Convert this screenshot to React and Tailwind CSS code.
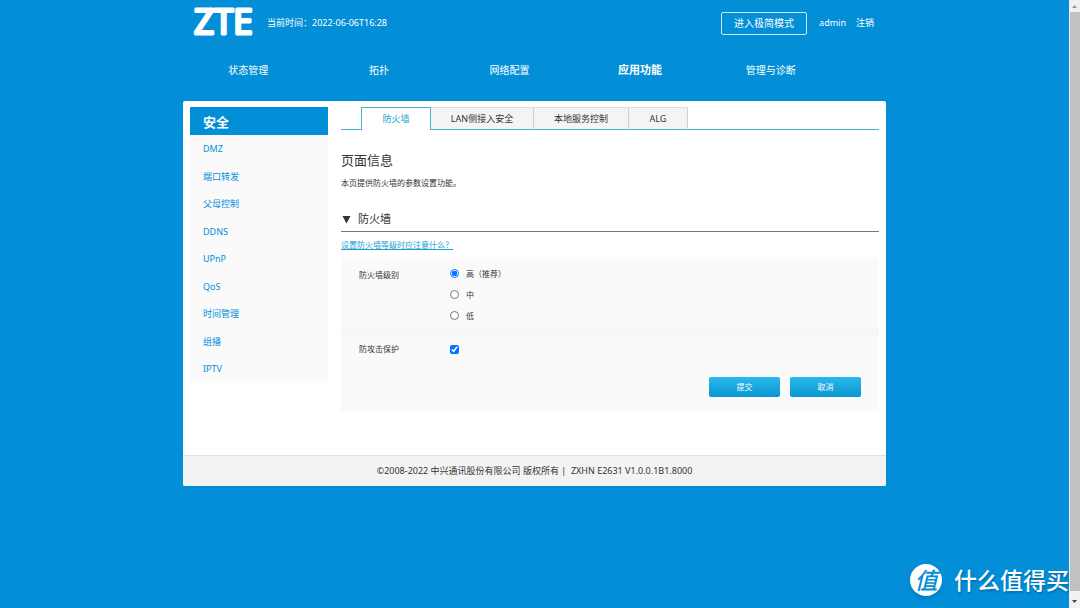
import React from "react";

const navItems = ["状态管理", "拓扑", "网络配置", "应用功能", "管理与诊断"];
const sideItems = ["DMZ", "端口转发", "父母控制", "DDNS", "UPnP", "QoS", "时间管理", "组播", "IPTV"];
const levels = ["高（推荐）", "中", "低"];

function Logo() {
  return (
    <svg viewBox="0 0 62 46" className="h-[46px] w-[62px] overflow-visible" role="img" aria-label="ZTE">
      <text
        x="1"
        y="34"
        fill="#fff"
        stroke="#fff"
        strokeWidth="3"
        strokeLinejoin="round"
        className="font-['Open_Sans',sans-serif] text-[35px] font-normal"
      >
        ZTE
      </text>
    </svg>
  );
}

function Header() {
  return (
    <header className="text-white">
      <div className="flex h-[46px] items-center pr-3 pl-2.5">
        <a href="#home">
          <Logo />
        </a>
        <p className="ml-3 text-[9px]">当前时间：2022-06-06T16:28</p>
        <button type="button" className="ml-auto h-[23px] rounded-xs border border-white/80 px-3 text-[10px]">
          进入极简模式
        </button>
        <a href="#admin" className="ml-3 text-[9px]">admin</a>
        <a href="#logout" className="ml-2.5 text-[9px]">注销</a>
      </div>
      <nav className="grid h-[55px] grid-cols-5 pt-[14px] pr-[50px] text-center">
        {navItems.map((item) => (
          <a
            key={item}
            href="#nav"
            className={item === "应用功能" ? "text-[11px] leading-5 font-bold" : "text-[10px] leading-5"}
          >
            {item}
          </a>
        ))}
      </nav>
    </header>
  );
}

function Sidebar() {
  return (
    <aside className="w-[138px] shrink-0 self-start bg-[#fafafa]">
      <h2 className="h-7 bg-[#028fd8] pl-[13px] text-[13px] leading-[30px] font-bold text-white">安全</h2>
      <ul className="grid h-[248px] auto-rows-fr pl-[13px] text-[9px] text-[#028fd8]">
        {sideItems.map((item) => (
          <li key={item} className="flex items-center">
            <a href="#side">{item}</a>
          </li>
        ))}
      </ul>
    </aside>
  );
}

function Tabs() {
  const tab = "border-r border-r-[#d0d0d0] border-t border-t-[#dedede] border-b border-b-[#45b2d8] bg-[#f4f4f4]";
  return (
    <div role="tablist" className="flex h-[23px] text-[9px] text-[#333]">
      <div className="w-5 border-b border-b-[#45b2d8]" />
      <button type="button" role="tab" aria-selected="true" className="w-[70px] border-x border-t border-[#45b2d8] text-[#1c9fd0]">
        防火墙
      </button>
      <button type="button" role="tab" className={`${tab} w-[103px]`}>LAN侧接入安全</button>
      <button type="button" role="tab" className={`${tab} w-[95px]`}>本地服务控制</button>
      <button type="button" role="tab" className={`${tab} w-[59px]`}>ALG</button>
      <div className="flex-1 border-b border-b-[#45b2d8]" />
    </div>
  );
}

function FirewallForm() {
  const action = "h-5 w-[71px] rounded-xs bg-linear-to-b from-[#29b9ee] to-[#0795cf] text-white";
  return (
    <form className="mt-1 bg-[#fafafa]" onSubmit={(e) => e.preventDefault()}>
      <div role="radiogroup" aria-labelledby="level-title" className="flex h-[71px] pt-1.5 pl-[18px]">
        <span id="level-title" className="w-[91px] leading-6">防火墙级别</span>
        <div className="leading-[21px]">
          {levels.map((level, i) => (
            <label key={level} className="flex items-center gap-[7px]">
              <input type="radio" name="level" defaultChecked={i === 0} className="h-[9px] w-[9px] accent-[#0075ff]" />
              {level}
            </label>
          ))}
        </div>
      </div>
      <div className="h-[9px] bg-[#f7f7f7]" />
      <div className="flex h-[24px] items-center pl-[18px]">
        <label htmlFor="guard" className="w-[91px]">防攻击保护</label>
        <input id="guard" type="checkbox" defaultChecked className="h-[9px] w-[9px] accent-[#0075ff]" />
      </div>
      <div className="flex justify-end gap-[10px] pt-4 pr-[18px] pb-[15px]">
        <button type="submit" className={action}>提交</button>
        <button type="reset" className={action}>取消</button>
      </div>
    </form>
  );
}

function Watermark() {
  return (
    <div className="absolute right-0 bottom-3 flex items-center gap-3 text-white">
      <span className="flex h-8 w-8 items-center justify-center rounded-full bg-white text-[23px] leading-8 font-medium text-[#028fd8] italic shadow-md">
        值
      </span>
      <span className="text-[23px] leading-8 font-medium [text-shadow:1px_2px_2px_rgb(0_60_110/0.4)]">什么值得买</span>
    </div>
  );
}

function ScrollBar() {
  return (
    <div className="flex w-[11px] shrink-0 flex-col items-center bg-[#f1f1f1]" aria-hidden="true">
      <svg viewBox="0 0 11 12" className="h-3 w-[11px]"><path d="M3 8 5.5 5 8 8z" fill="#999" /></svg>
      <div className="mb-[5px] w-[10px] flex-1 bg-[#c1c1c1]" />
      <svg viewBox="0 0 11 12" className="h-3 w-[11px]"><path d="M3 4 5.5 7 8 4z" fill="#444" /></svg>
    </div>
  );
}

export default function App() {
  return (
    <div className="flex min-h-screen bg-[#028fd8] font-['Noto_Sans','Noto_Sans_CJK_SC',sans-serif] text-[8px] text-[#333]">
      <div className="relative flex-1">
        <div className="mx-auto max-w-[703px]">
          <Header />
          <div className="overflow-hidden rounded-xs bg-white">
            <div className="flex gap-[13px] px-[7px] pt-1.5 pb-[43px]">
              <Sidebar />
              <main className="min-w-0 flex-1">
                <Tabs />
                <h1 className="mt-5 text-[13px] leading-5">页面信息</h1>
                <p className="mt-[5px] leading-4">本页提供防火墙的参数设置功能。</p>
                <h2 className="mt-[17px] flex h-6 items-center gap-[7px] border-b border-[#777] pl-[1px] text-[11px]">
                  <svg viewBox="0 0 9 9" className="h-[9px] w-[9px]"><path d="M0.5 1h8L4.5 8.5z" fill="#333" /></svg>
                  防火墙
                </h2>
                <a href="#help" className="mt-[5px] block w-fit leading-4 text-[#1c9fd0] underline">
                  设置防火墙等级时应注意什么？
                </a>
                <FirewallForm />
              </main>
            </div>
            <footer className="border-t border-[#e2e2e2] bg-[#f3f3f3] text-center text-[9px] leading-[30px]">
              ©2008-2022 中兴通讯股份有限公司 版权所有 | &nbsp;ZXHN E2631 V1.0.0.1B1.8000
            </footer>
          </div>
        </div>
        <Watermark />
      </div>
      <ScrollBar />
    </div>
  );
}
